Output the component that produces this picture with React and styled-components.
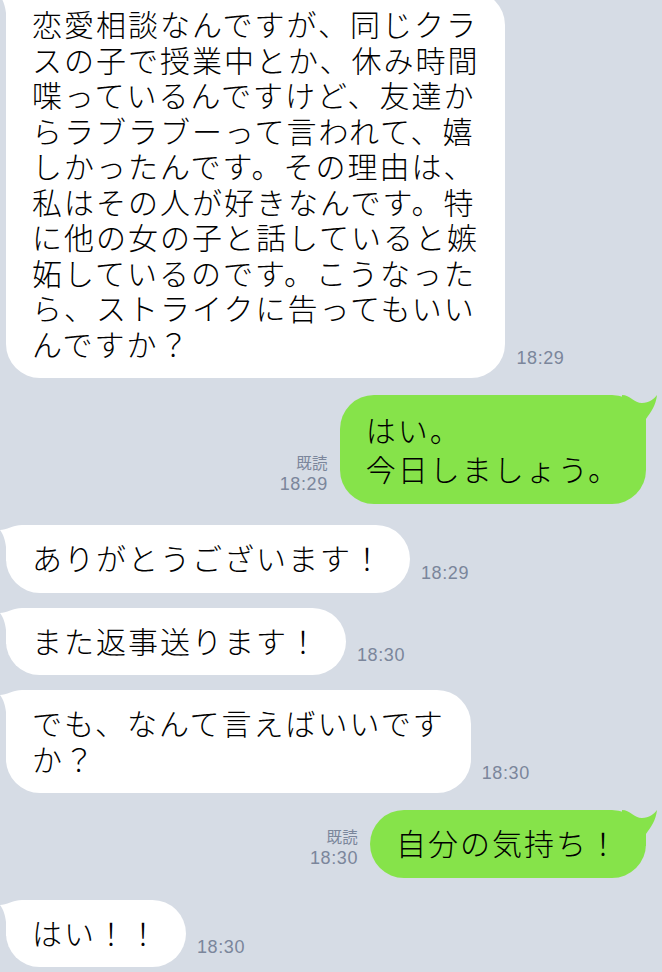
import React from "react";
import styled, { createGlobalStyle } from "styled-components";

const GlobalStyle = createGlobalStyle`
  html, body {
    margin: 0;
    padding: 0;
    height: 972px;
    overflow: hidden;
    background: #d6dce5;
  }
`;

const messages = [
  {
    mine: false,
    gap: 0,
    time: "18:29",
    lines: [
      "恋愛相談なんですが、同じクラ",
      "スの子で授業中とか、休み時間",
      "喋っているんですけど、友達か",
      "らラブラブーって言われて、嬉",
      "しかったんです。その理由は、",
      "私はその人が好きなんです。特",
      "に他の女の子と話していると嫉",
      "妬しているのです。こうなった",
      "ら、ストライクに告ってもいい",
      "んですか？",
    ],
  },
  { mine: true, gap: 17, time: "18:29", loose: true, lines: ["はい。", "今日しましょう。"] },
  { mine: false, gap: 21, time: "18:29", lines: ["ありがとうございます！"] },
  { mine: false, gap: 15, time: "18:30", lines: ["また返事送ります！"] },
  { mine: false, gap: 15, time: "18:30", lines: ["でも、なんて言えばいいです", "か？"] },
  { mine: true, gap: 17, time: "18:30", lines: ["自分の気持ち！"] },
  { mine: false, gap: 22, time: "18:30", lines: ["はい！！"] },
];

const Chat = styled.div`
  display: flex;
  flex-direction: column;
  margin-top: -9px;
`;

const Row = styled.div`
  display: flex;
  align-items: flex-end;
  justify-content: ${(p) => (p.$mine ? "flex-end" : "flex-start")};
  margin-top: ${(p) => p.$gap}px;
  padding: ${(p) => (p.$mine ? "0 16px 0 0" : "0 0 0 6px")};
`;

const Bubble = styled.div`
  position: relative;
  background: ${(p) => (p.$mine ? "#86e34a" : "#ffffff")};
  border-radius: 34px;
  padding: 15px 26px 17px;
  font-family: "Noto Sans CJK JP", "Noto Sans", sans-serif;
  font-weight: 300;
  font-size: 30px;
  letter-spacing: 2px;
  line-height: ${(p) => (p.$loose ? "38.5px" : "35.5px")};
  color: #000;
`;

const Text = styled.div`
  position: relative;
`;

const Line = styled.span`
  display: block;
  white-space: nowrap;
`;

const TailSvg = styled.svg`
  position: absolute;
  top: 0;
  ${(p) => (p.$mine ? "right: -12px;" : "left: -6px;")}
  width: ${(p) => (p.$mine ? 36 : 40)}px;
  height: 36px;
`;

const Time = styled.div`
  font-family: "Liberation Sans", Arial, sans-serif;
  font-size: 18px;
  letter-spacing: 0.6px;
  line-height: 22px;
  color: #7b869b;
  padding-bottom: 9px;
  margin-left: 11px;
`;

const ReadMeta = styled.div`
  display: flex;
  flex-direction: column;
  align-items: flex-end;
  margin-right: 12px;
  padding-bottom: 9px;
  color: #7b869b;
`;

const ReadLabel = styled.div`
  font-family: "Noto Sans CJK JP", sans-serif;
  font-size: 15.5px;
  letter-spacing: 0.3px;
  line-height: 22px;
`;

const ReadTime = styled.div`
  font-family: "Liberation Sans", Arial, sans-serif;
  font-size: 18px;
  letter-spacing: 0.6px;
  line-height: 22px;
`;

const Tail = ({ mine }) =>
  mine ? (
    <TailSvg $mine viewBox="0 0 36 36">
      <path
        d="M0 0 C8 0 12 8 20 8 C27 8 32 4 35 0 C34 10 29 17 24 24 L24 36 L0 36 Z"
        fill="#86e34a"
      />
    </TailSvg>
  ) : (
    <TailSvg viewBox="0 0 40 36">
      <path
        d="M40 0 L22 0 C14 0 6 5 0 5 C3 9 5 14 6 22 L6 36 L40 36 Z"
        fill="#ffffff"
      />
    </TailSvg>
  );

const Message = ({ msg }) => {
  const bubble = (
    <Bubble $mine={msg.mine} $loose={msg.loose}>
      <Tail mine={msg.mine} />
      <Text>
        {msg.lines.map((l, i) => (
          <Line key={i}>{l}</Line>
        ))}
      </Text>
    </Bubble>
  );

  if (msg.mine) {
    return (
      <Row $mine $gap={msg.gap}>
        <ReadMeta>
          <ReadLabel>既読</ReadLabel>
          <ReadTime>{msg.time}</ReadTime>
        </ReadMeta>
        {bubble}
      </Row>
    );
  }

  return (
    <Row $gap={msg.gap}>
      {bubble}
      <Time>{msg.time}</Time>
    </Row>
  );
};

export default function App() {
  return (
    <>
      <GlobalStyle />
      <Chat>
        {messages.map((m, i) => (
          <Message key={i} msg={m} />
        ))}
      </Chat>
    </>
  );
}
